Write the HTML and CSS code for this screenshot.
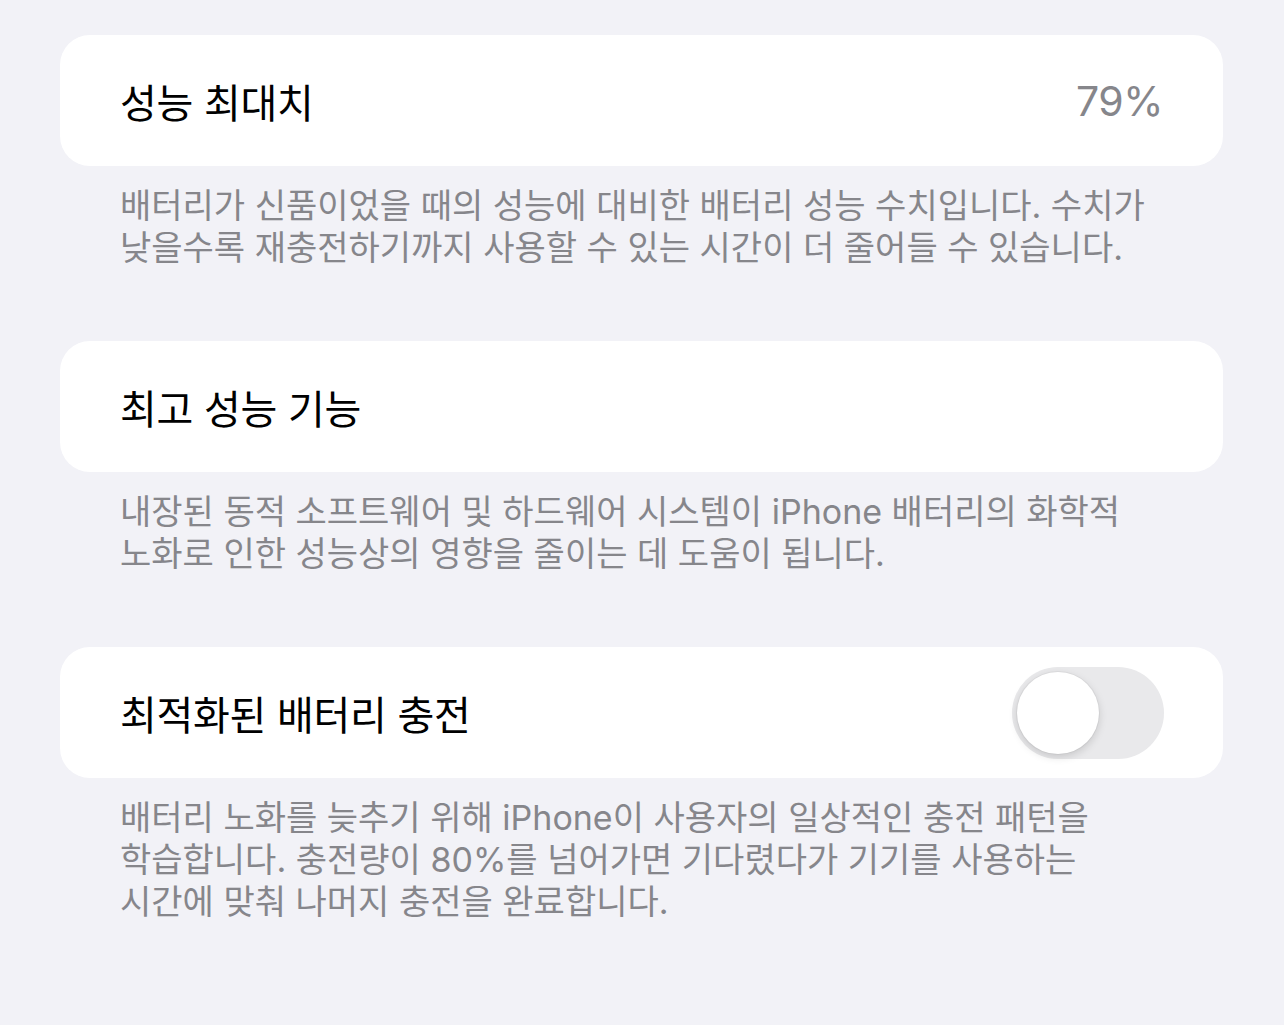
FILE: index.html
```html
<!DOCTYPE html>
<html lang="ko">
<head>
  <meta charset="UTF-8" />
  <meta name="viewport" content="width=device-width, initial-scale=1.0" />
  <title>배터리 성능 상태</title>
  <link rel="stylesheet" href="styles.css">
</head>
<body>

  <main class="settings">
    <!-- 성능 최대치 -->
    <section class="group">
      <div class="cell">
        <span class="cell-title">성능 최대치</span>
        <span class="cell-value">79%</span>
      </div>
      <p class="footer">배터리가 신품이었을 때의 성능에 대비한 배터리 성능 수치입니다. 수치가<br>낮을수록 재충전하기까지 사용할 수 있는 시간이 더 줄어들 수 있습니다.</p>
    </section>

    <!-- 최고 성능 기능 -->
    <section class="group">
      <div class="cell">
        <span class="cell-title">최고 성능 기능</span>
      </div>
      <p class="footer">내장된 동적 소프트웨어 및 하드웨어 시스템이 iPhone 배터리의 화학적<br>노화로 인한 성능상의 영향을 줄이는 데 도움이 됩니다.</p>
    </section>

    <!-- 최적화된 배터리 충전 -->
    <section class="group">
      <div class="cell">
        <span class="cell-title">최적화된 배터리 충전</span>
        <label class="switch">
          <input type="checkbox" />
          <span class="knob"></span>
        </label>
      </div>
      <p class="footer">배터리 노화를 늦추기 위해 iPhone이 사용자의 일상적인 충전 패턴을<br>학습합니다. 충전량이 80%를 넘어가면 기다렸다가 기기를 사용하는<br>시간에 맞춰 나머지 충전을 완료합니다.</p>
    </section>
  </main>

</body>
</html>
```

FILE: styles.css
```css
:root {
  --background: #f2f2f7;
  --surface: #ffffff;
  --text: #000000;
  --secondary: #86868b;
  --track: #e9e9eb;
}

* {
  margin: 0;
  padding: 0;
  box-sizing: border-box;
}

body {
  background-color: var(--background);
  color: var(--text);
  font-family: "Inter", "Noto Sans CJK KR", sans-serif;
}

.settings {
  padding: 35px 61px 0 60px;
  display: flex;
  flex-direction: column;
  gap: 72px;
}

.cell {
  height: 131px;
  background: var(--surface);
  border-radius: 30px;
  padding: 0 60px;
  display: flex;
  align-items: center;
  justify-content: space-between;
}

.cell-title {
  font-size: 40px;
  letter-spacing: -0.3px;
}

.cell-value {
  font-size: 41px;
  color: var(--secondary);
  letter-spacing: -0.5px;
}

.footer {
  margin-top: 19px;
  padding: 0 60px;
  font-size: 34px;
  line-height: 42px;
  color: var(--secondary);
  white-space: nowrap;
}

.switch {
  position: relative;
  width: 152px;
  height: 92px;
  margin-right: -1px;
}

.switch input {
  display: none;
}

.knob {
  display: block;
  width: 100%;
  height: 100%;
  border-radius: 46px;
  background: var(--track);
}

.knob::after {
  content: "";
  position: absolute;
  top: 5px;
  left: 5px;
  width: 82px;
  height: 82px;
  border-radius: 50%;
  background: #fff;
  box-shadow: 0 3px 8px rgba(0,0,0,0.15), 0 0 0 1px rgba(0,0,0,0.04);
}
```
